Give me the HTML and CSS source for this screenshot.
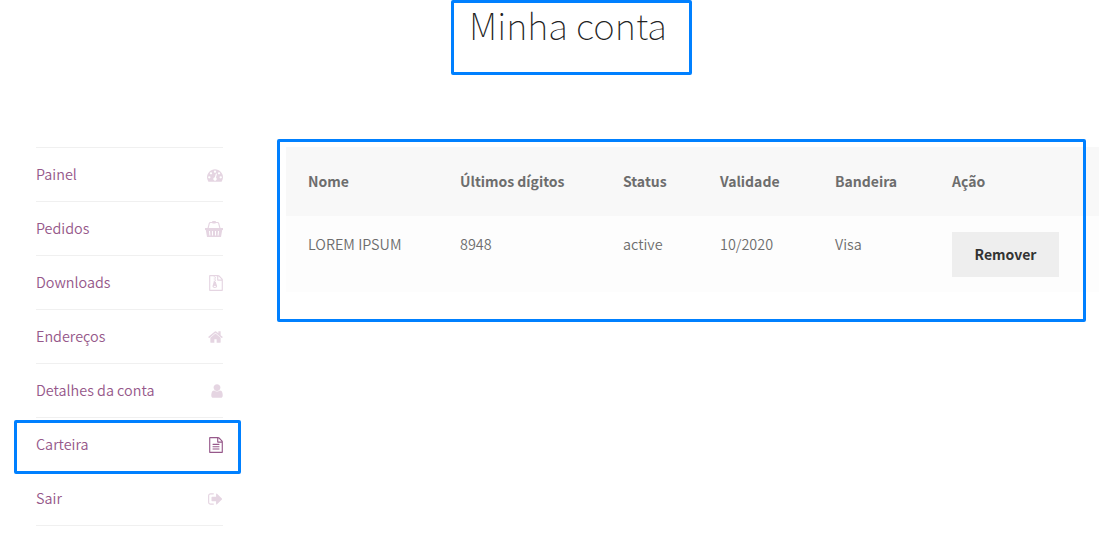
FILE: index.html
```html
<!DOCTYPE html>
<html lang="pt-BR">
<head>
<meta charset="utf-8">
<title>Minha conta</title>
<link rel="stylesheet" href="styles.css">
</head>
<body>
<header class="page-header"><h1 class="page-title">Minha conta</h1></header>
<main class="account">
  <nav class="account-nav">
    <a class="nav-item"><span>Painel</span><svg class="icon" width="16" height="16" viewBox="0 0 1792 1792"><path d="M384 1152q0-53-37.5-90.5t-90.5-37.5-90.5 37.5-37.5 90.5 37.5 90.5 90.5 37.5 90.5-37.5 37.5-90.5zm192-448q0-53-37.5-90.5t-90.5-37.5-90.5 37.5-37.5 90.5 37.5 90.5 90.5 37.5 90.5-37.5 37.5-90.5zm428 481l101-382q6-26-7.5-48.5t-38.5-29.5-48 6.5-30 39.5l-101 382q-60 5-107 43.5t-63 98.5q-20 77 20 146t117 89 146-20 89-117q16-60-6-117t-72-91zm660-33q0-53-37.5-90.5t-90.5-37.5-90.5 37.5-37.5 90.5 37.5 90.5 90.5 37.5 90.5-37.5 37.5-90.5zm-640-640q0-53-37.5-90.5t-90.5-37.5-90.5 37.5-37.5 90.5 37.5 90.5 90.5 37.5 90.5-37.5 37.5-90.5zm448 192q0-53-37.5-90.5t-90.5-37.5-90.5 37.5-37.5 90.5 37.5 90.5 90.5 37.5 90.5-37.5 37.5-90.5zm320 448q0 261-141 483-19 29-54 29h-1402q-35 0-54-29-141-221-141-483 0-182 71-348t191-286 286-191 348-71 348 71 286 191 191 286 71 348z"/></svg></a>
    <a class="nav-item"><span>Pedidos</span><svg class="icon" width="18" height="16" viewBox="0 0 18 16"><path fill-rule="evenodd" d="M0 7h18v2h-.8l-1.2 7H2L.8 9H0zM4 10l.4 4.5h1L5 10zM7 10v4.500h1V10zM10 10v4.500h1V10zM13 10l-.4 4.500h1L14 10z"/><path fill="none" stroke="currentColor" stroke-width="1.100" d="M3 7.500l1.300-5Q4.500 1.500 5.500 1.500H12.500Q13.500 1.500 13.700 2.500L15 7.500"/><rect x="7" y="0" width="4" height="2.500" rx="1"/></svg></a>
    <a class="nav-item"><span>Downloads</span><svg class="icon" width="14" height="16" viewBox="128 0 1536 1792"><path d="M1596 380q28 28 48 76t20 88v1152q0 40-28 68t-68 28h-1344q-40 0-68-28t-28-68v-1600q0-40 28-68t68-28h896q40 0 88 20t76 48zm-444-244v376h376q-10-29-22-41l-313-313q-12-12-41-22zm384 1528v-1024h-416q-40 0-68-28t-28-68v-416h-768v1536h1280z"/><path fill-rule="evenodd" d="M640 128h128v128H640zM768 256h128v128H768zM640 384h128v128H640zM768 512h128v128H768zM640 640h128v128H640zM768 768h128v100l107 320q15 50 15 83 0 84-73 138t-183 54-183-54-73-138q0-33 15-83l119-420h128zM768 1344q53 0 90.500-19t37.500-45-37.500-45-90.500-19-90.500 19-37.500 45 37.500 45 90.500 19z"/></svg></a>
    <a class="nav-item"><span>Endereços</span><svg class="icon" width="15" height="16" viewBox="64 0 1664 1792"><path d="M1472 992v480q0 26-19 45t-45 19h-384v-384h-256v384h-384q-26 0-45-19t-19-45v-480q0-1 .5-3t.5-3l575-474 575 474q1 2 1 6zm223-69l-62 74q-8 9-21 11h-3q-13 0-21-7l-692-577-692 577q-12 8-24 7-13-2-21-11l-62-74q-8-10-7-23.500t11-21.500l719-599q32-26 76-26t76 26l244 204v-195q0-14 9-23t23-9h192q14 0 23 9t9 23v408l219 182q10 8 11 21.500t-7 23.500z"/></svg></a>
    <a class="nav-item"><span>Detalhes da conta</span><svg class="icon" width="12" height="16" viewBox="256 0 1280 1792"><path d="M1536 1399q0 109-62.500 187t-150.500 78h-854q-88 0-150.500-78t-62.500-187q0-85 8.500-160.500t31.500-152 58.500-131 94-89 134.500-34.500q131 128 313 128t313-128q76 0 134.500 34.500t94 89 58.500 131 31.500 152 8.500 160.500zm-256-887q0 159-112.500 271.500t-271.500 112.500-271.500-112.500-112.500-271.500 112.500-271.500 271.500-112.500 271.500 112.500 112.500 271.500z"/></svg></a>
    <a class="nav-item nav-item-active"><span>Carteira</span><svg class="icon" width="14" height="16" viewBox="128 0 1536 1792"><path d="M1596 380q28 28 48 76t20 88v1152q0 40-28 68t-68 28h-1344q-40 0-68-28t-28-68v-1600q0-40 28-68t68-28h896q40 0 88 20t76 48zm-444-244v376h376q-10-29-22-41l-313-313q-12-12-41-22zm384 1528v-1024h-416q-40 0-68-28t-28-68v-416h-768v1536h1280zm-1024-864q0-14 9-23t23-9h704q14 0 23 9t9 23v64q0 14-9 23t-23 9h-704q-14 0-23-9t-9-23v-64zm736 224q14 0 23 9t9 23v64q0 14-9 23t-23 9h-704q-14 0-23-9t-9-23v-64q0-14 9-23t23-9h704zm0 256q14 0 23 9t9 23v64q0 14-9 23t-23 9h-704q-14 0-23-9t-9-23v-64q0-14 9-23t23-9h704z"/></svg></a>
    <a class="nav-item"><span>Sair</span><svg class="icon" width="15" height="16" viewBox="64 0 1664 1792"><path d="M704 1440q0 4 1 20t.5 26.500-3 23.500-10 19.500-20.500 6.500h-320q-119 0-203.500-84.500t-84.500-203.500v-704q0-119 84.500-203.500t203.500-84.500h320q13 0 22.500 9.500t9.500 22.500q0 4 1 20t.5 26.500-3 23.500-10 19.500-20.500 6.500h-320q-66 0-113 47t-47 113v704q0 66 47 113t113 47h312l11.500 1 11.500 3 8 5.500 7 9 2 13.500zm928-544q0 26-19 45l-544 544q-19 19-45 19t-45-19-19-45v-288h-448q-26 0-45-19t-19-45v-384q0-26 19-45t45-19h448v-288q0-26 19-45t45-19 45 19l544 544q19 19 19 45z"/></svg></a>
  </nav>
  <section class="wallet">
    <table class="cards">
      <colgroup><col class="col-name"><col class="col-digits"><col class="col-status"><col class="col-expiry"><col class="col-brand"><col class="col-action"></colgroup>
      <thead><tr><th>Nome</th><th>Últimos dígitos</th><th>Status</th><th>Validade</th><th>Bandeira</th><th>Ação</th></tr></thead>
      <tbody><tr><td>LOREM IPSUM</td><td>8948</td><td>active</td><td>10/2020</td><td>Visa</td><td class="cell-action"><button class="remove">Remover</button></td></tr></tbody>
    </table>
  </section>
</main>
</body>
</html>
```
FILE: styles.css
```css
* { box-sizing: border-box; }
body {
  margin: 0;
  height: 548px;
  overflow: hidden;
  background: #fff;
  color: #6d6d6d;
  font-family: "Noto Sans CJK SC", "Noto Sans", sans-serif;
  font-size: 14.4px;
  line-height: 24px;
}
.page-header { height: 147px; position: relative; width: 241px; margin-left: 451px; }
.page-title {
  margin: 0;
  padding-left: 18px;
  font-size: 36.6px;
  line-height: 50px;
  font-weight: 100;
  color: #222;
  white-space: nowrap;
}
.page-header::after, .nav-item-active::after, .wallet::after {
  content: "";
  box-sizing: border-box;
  position: absolute;
  border: 3px solid #0080ff;
  border-radius: 2px;
  pointer-events: none;
}
.page-header::after { inset: 0 0 72px 0; }
.account { display: flex; gap: 63px; padding-left: 36px; }
.account-nav { width: 187px; border-top: 1px solid #f0f0f0; }
.nav-item {
  position: relative;
  display: flex;
  justify-content: space-between;
  align-items: center;
  height: 54px;
  border-bottom: 1px solid #f0f0f0;
  color: #96588a;
  font-weight: 350;
}
.nav-item span { padding-bottom: 2px; }
.icon { fill: currentColor; color: #e5d5e2; display: block; }
.nav-item-active .icon { color: #96588a; }
.nav-item-active::after { inset: 2px -18px -3px -22px; }
.wallet { position: relative; width: 813px; }
.wallet::after { left: -9px; top: -8px; width: 809px; height: 183px; }
.cards { width: 813px; table-layout: fixed; border-collapse: collapse; text-align: left; }
.col-name { width: 152px; }
.col-digits { width: 163px; }
.col-status { width: 97px; }
.col-expiry { width: 115px; }
.col-brand { width: 117px; }
.col-action { width: 169px; }
th { height: 69px; padding: 0 0 2px 22px; background: #f8f8f8; font-size: 14px; font-weight: 600; white-space: nowrap; }
td { height: 76px; padding: 16px 0 0 22px; background: #fdfdfd; vertical-align: top; white-space: nowrap; font-weight: 350; }
.remove {
  display: block;
  width: 107px;
  height: 45px;
  padding: 0 0 2px;
  border: 0;
  background: #eee;
  color: #333;
  font: inherit;
  font-size: 14px;
  font-weight: 600;
}
```
